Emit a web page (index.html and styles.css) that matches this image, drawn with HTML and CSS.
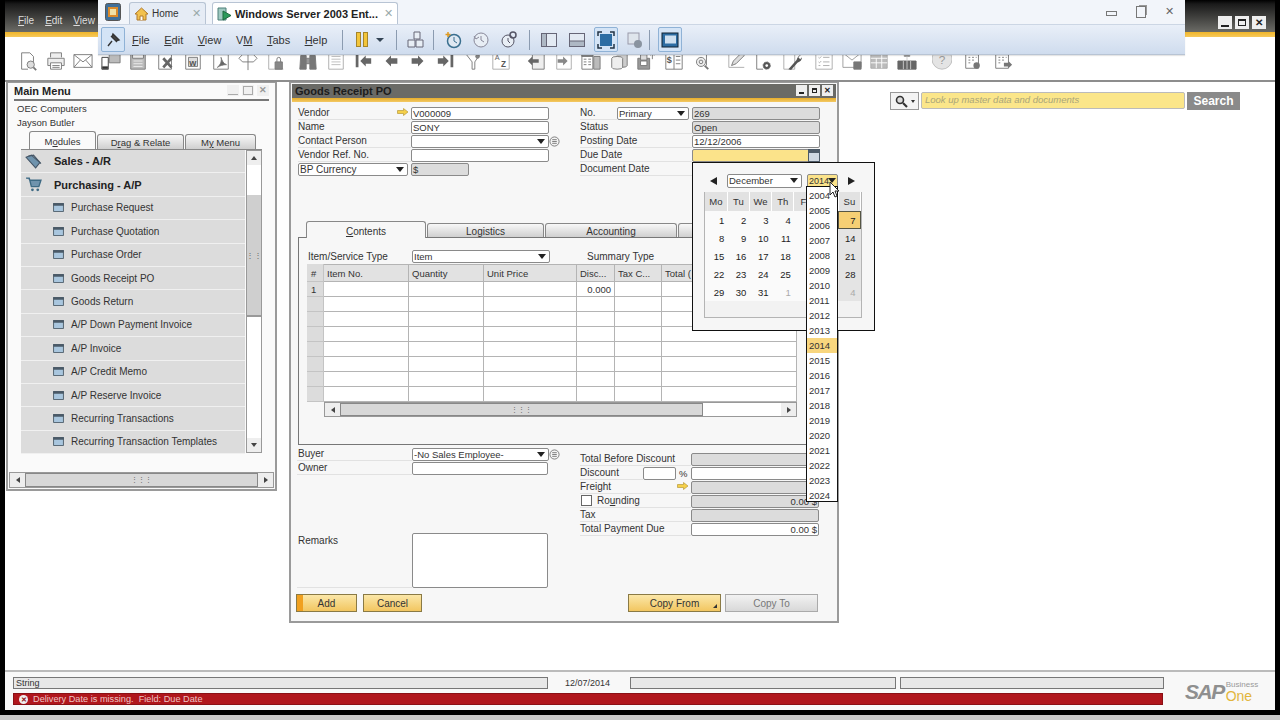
FILE: index.html
```html
<!DOCTYPE html>
<html lang="en">
<head>
  <meta charset="UTF-8">
  <title>Goods Receipt PO</title>
  <link rel="stylesheet" href="styles.css">
</head>
<body>
  <svg class="sprite" width="0" height="0">
    <defs>
      <symbol id="i-docsearch" viewBox="0 0 22 22"><path d="M4 2h9l4 4v6M4 2v18h7" fill="#fff"/><circle cx="14" cy="15" r="4" fill="#ddd"/><path d="M17 18l3 3" stroke-width="2"/></symbol>
      <symbol id="i-print" viewBox="0 0 22 22"><path d="M5 7V2h12v5M5 16H2V8h18v8h-3" fill="#eee"/><path d="M5 13h12v7H5z" fill="#fff"/><path d="M7 16h8M7 18h8"/></symbol>
      <symbol id="i-mail" viewBox="0 0 22 22"><path d="M1 4h20v14H1zM1 4l10 8 10-8M1 18l7-8M21 18l-7-8" fill="#fff"/></symbol>
      <symbol id="i-fax" viewBox="0 0 22 22"><path d="M9 3h12v10H9z" fill="#bbb"/><path d="M1 7h7v13H1z" fill="#fff" stroke="#333"/><path d="M1 17h7v3H1z" fill="#333"/></symbol>
      <symbol id="i-calc" viewBox="0 0 22 22"><path d="M3 2h16v18H3z" fill="#bbb"/><path d="M5 4h12v4H5z" fill="#eee"/><path d="M6 11h10M6 14h10M6 17h10" stroke="#eee"/></symbol>
      <symbol id="i-excel" viewBox="0 0 22 22"><path d="M3 3h14v17H3z" fill="#fff"/><path d="M8 8l9 10M17 8l-9 10" stroke="#666" stroke-width="3"/></symbol>
      <symbol id="i-word" viewBox="0 0 22 22"><path d="M3 4h16v16H3z" fill="#fff"/><path d="M6 7h10v10H6z" fill="#ddd"/><text x="7" y="16" font-size="10" font-weight="700" stroke="none" fill="#555">w</text></symbol>
      <symbol id="i-pdf" viewBox="0 0 22 22"><path d="M3 4h16v16H3z" fill="#fff"/><path d="M7 18c4-3 5-8 4-11 1 4 3 7 6 8-4 0-7 1-10 3z" fill="#666"/></symbol>
      <symbol id="i-arrows" viewBox="0 0 22 22"><path d="M11 2v19M11 4H5L1 8l4 4h6M11 4h6l4 4-4 4h-6" fill="#fff"/></symbol>
      <symbol id="i-lockdoc" viewBox="0 0 22 22"><path d="M3 2v18h16" stroke="#aaa"/><path d="M10 12h8v8h-8z" fill="#888"/><path d="M12 12V9a2 2 0 014 0v3"/></symbol>
      <symbol id="i-binoc" viewBox="0 0 22 22"><path d="M3 5h6v15H2zM13 5h6l1 15h-7z" fill="#777"/><path d="M9 8h4v6H9z" fill="#999"/></symbol>
      <symbol id="i-list" viewBox="0 0 22 22"><path d="M3 2h16v18H3z" fill="#fff" stroke="#aaa"/><path d="M6 6h10M6 9h10M6 12h10M6 15h10" stroke="#bbb"/></symbol>
      <symbol id="i-first" viewBox="0 0 22 22"><path d="M3 4h3v14H3zM8 11l6-6v3h6v6h-6v3z" fill="#666" stroke="none"/></symbol>
      <symbol id="i-prev" viewBox="0 0 22 22"><path d="M5 11l6-6v3h7v6h-7v3z" fill="#666" stroke="none"/></symbol>
      <symbol id="i-next" viewBox="0 0 22 22"><path d="M17 11l-6-6v3H4v6h7v3z" fill="#666" stroke="none"/></symbol>
      <symbol id="i-last" viewBox="0 0 22 22"><path d="M19 4h-3v14h3zM14 11L8 5v3H2v6h6v3z" fill="#666" stroke="none"/></symbol>
      <symbol id="i-filter" viewBox="0 0 22 22"><path d="M3 3l7 9v8h3v-8l6-9" fill="#fff"/><circle cx="16" cy="6" r="2" fill="#888"/></symbol>
      <symbol id="i-az" viewBox="0 0 22 22"><path d="M2 2h18v18H2z" fill="#fff" stroke="#aaa"/><text x="4" y="10" font-size="8" stroke="none" fill="#666">A</text><text x="11" y="18" font-size="9" font-weight="700" stroke="none" fill="#555">Z</text></symbol>
      <symbol id="i-docleft" viewBox="0 0 22 22"><path d="M7 2h13v18H7z" fill="#eee"/><path d="M2 11l5-5v3h7v4H7v3z" fill="#666" stroke="none"/></symbol>
      <symbol id="i-docright" viewBox="0 0 22 22"><path d="M3 4h16v16H3z" fill="#fff" stroke="#aaa"/><path d="M15 11l-5-5v3H4v4h6v3z" fill="#888" stroke="none"/></symbol>
      <symbol id="i-tabledoc" viewBox="0 0 22 22"><path d="M1 3h12v17H1z" fill="#fff"/><path d="M1 3h12v3H1z" fill="#888"/><path d="M3 9h3M8 9h3M3 12h3M8 12h3M3 15h3M8 15h3"/><path d="M14 6h7v14h-7z" fill="#bbb"/></symbol>
      <symbol id="i-cyl" viewBox="0 0 22 22"><path d="M8 4a6 2 0 0112 0v12a6 2 0 01-6 2" fill="#ccc"/><path d="M3 8a6 2 0 0112 0v10a6 2 0 01-12 0z" fill="#eee"/></symbol>
      <symbol id="i-box" viewBox="0 0 22 22"><path d="M2 8h13v12H2z" fill="#999"/><path d="M5 4h7v6H5z" fill="#ddd"/><path d="M5 11h7v5H5z" fill="#fff"/><path d="M18 3v6M16 5l2-2 2 2"/></symbol>
      <symbol id="i-dollar" viewBox="0 0 22 22"><path d="M2 2h18v18H2z" fill="#fff"/><path d="M11 2v18M13 6h5M13 10h5M13 14h5"/><text x="3" y="13" font-size="10" font-weight="700" stroke="none" fill="#555">$</text></symbol>
      <symbol id="i-find" viewBox="0 0 22 22"><path d="M2 3h15v13" fill="#fff"/><circle cx="11" cy="12" r="5" fill="#eee"/><circle cx="11" cy="12" r="2"/><path d="M15 16l4 4" stroke-width="2"/></symbol>
      <symbol id="i-pencil" viewBox="0 0 22 22"><path d="M2 18h17M2 3v15" stroke="#aaa"/><path d="M5 16l2-5 9-9 3 3-9 9z" fill="#ddd"/></symbol>
      <symbol id="i-gear" viewBox="0 0 22 22"><path d="M3 2v18h7" stroke="#777"/><circle cx="14" cy="16" r="4" fill="#555" stroke-dasharray="2 1"/><circle cx="14" cy="16" r="1.5" fill="#fff" stroke="none"/></symbol>
      <symbol id="i-wrench" viewBox="0 0 22 22"><path d="M2 3h12v17H2z" fill="#fff" stroke="#aaa"/><path d="M7 20l9-10c1-3 2-5 5-6l-3 3 2 2 2-2c0 3-2 5-5 6l-7 8z" fill="#555" stroke="none"/></symbol>
      <symbol id="i-check" viewBox="0 0 22 22"><path d="M2 2h18v18H2z" fill="#fff" stroke="#aaa"/><path d="M5 7l1 1 2-2M5 12l1 1 2-2M5 16h2M10 7h7M10 12h7M10 16h7" stroke="#aaa"/></symbol>
      <symbol id="i-mailchart" viewBox="0 0 22 22"><path d="M1 2h20v16H1zM1 2l10 8 10-8" fill="#fff" stroke="#999"/><path d="M13 12h8v8h-8z" fill="#777"/></symbol>
      <symbol id="i-grid" viewBox="0 0 22 22"><path d="M2 3h18v16H2z" fill="#bbb" stroke="#aaa"/><path d="M2 8h18M2 13h18M8 8v11M14 3v16" stroke="#fff"/></symbol>
      <symbol id="i-org" viewBox="0 0 22 22"><path d="M8 1h6v5H8z" fill="#999" stroke="#999"/><path d="M1 11h20v9H1z" fill="#666" stroke="#666"/><path d="M11 6v14M7 11v9M15 11v9" stroke="#ccc"/></symbol>
      <symbol id="i-help" viewBox="0 0 22 22"><circle cx="11" cy="9" r="11" fill="#e4e4e4" stroke="#bbb"/><text x="7.5" y="14" font-size="13" stroke="none" fill="#999">?</text></symbol>
      <symbol id="i-tablegear" viewBox="0 0 22 22"><path d="M3 1h14v18H3z" fill="#fff"/><path d="M3 1h14v3H3z" fill="#888"/><path d="M6 7h2M10 7h2M14 7h1M6 10h2M10 10h2M6 13h2"/><circle cx="15" cy="16" r="3.5" fill="#777" stroke="none"/></symbol>
      <symbol id="i-tablearrow" viewBox="0 0 22 22"><path d="M3 1h14v18H3z" fill="#fff"/><path d="M3 1h14v3H3z" fill="#888"/><path d="M6 7h2M10 7h2M14 7h1M6 10h2M10 10h2M6 13h2"/><path d="M21 15l-4-4v2h-5v4h5v2z" fill="#777" stroke="none"/></symbol>
      <symbol id="i-form" viewBox="0 0 12 10"><path d="M.5.5h11v9H.5z" fill="#a9c6de" stroke="#4b5a68"/><path d="M.5.5h11v2H.5z" fill="#4b5a68" stroke="#4b5a68"/></symbol>
      <symbol id="i-arrow" viewBox="0 0 12 8"><path d="M.5 2.500h6v-2L11 4 6.500 7.500v-2h-6z" fill="#f5d04a" stroke="#b79a3a" stroke-width=".7"/></symbol>
      <symbol id="i-menu" viewBox="0 0 12 12"><circle cx="6" cy="6" r="5" fill="#f4f4f4" stroke="#777"/><path d="M3.500 4h5M3.500 6h5M3.500 8h5" stroke="#777"/></symbol>
    </defs>
  </svg>

  <div class="app">
    <div class="app-title">
      <div class="app-menu"><span><u>F</u>ile</span><span><u>E</u>dit</span><span><u>V</u>iew</span></div>
      <div class="app-controls">
        <span class="ctl-min"></span><span class="ctl-max"></span><span class="ctl-close">✕</span>
      </div>
    </div>

    <div class="toolbar">
      <svg class="ti"><use href="#i-docsearch"/></svg>
      <svg class="ti"><use href="#i-print"/></svg>
      <svg class="ti"><use href="#i-mail"/></svg>
      <svg class="ti"><use href="#i-fax"/></svg>
      <svg class="ti"><use href="#i-calc"/></svg>
      <svg class="ti"><use href="#i-excel"/></svg>
      <svg class="ti"><use href="#i-word"/></svg>
      <svg class="ti"><use href="#i-pdf"/></svg>
      <svg class="ti"><use href="#i-arrows"/></svg>
      <svg class="ti"><use href="#i-lockdoc"/></svg>
      <svg class="ti ti-gap"><use href="#i-binoc"/></svg>
      <svg class="ti"><use href="#i-list"/></svg>
      <svg class="ti"><use href="#i-first"/></svg>
      <svg class="ti"><use href="#i-prev"/></svg>
      <svg class="ti"><use href="#i-next"/></svg>
      <svg class="ti"><use href="#i-last"/></svg>
      <svg class="ti"><use href="#i-filter"/></svg>
      <svg class="ti"><use href="#i-az"/></svg>
      <svg class="ti ti-gap-lg"><use href="#i-docleft"/></svg>
      <svg class="ti"><use href="#i-docright"/></svg>
      <svg class="ti"><use href="#i-tabledoc"/></svg>
      <svg class="ti"><use href="#i-cyl"/></svg>
      <svg class="ti"><use href="#i-box"/></svg>
      <svg class="ti"><use href="#i-dollar"/></svg>
      <svg class="ti"><use href="#i-find"/></svg>
      <svg class="ti ti-gap-lg"><use href="#i-pencil"/></svg>
      <svg class="ti"><use href="#i-gear"/></svg>
      <svg class="ti"><use href="#i-wrench"/></svg>
      <svg class="ti ti-gap"><use href="#i-check"/></svg>
      <svg class="ti"><use href="#i-mailchart"/></svg>
      <svg class="ti"><use href="#i-grid"/></svg>
      <svg class="ti"><use href="#i-org"/></svg>
      <svg class="ti ti-gap-lg"><use href="#i-help"/></svg>
      <svg class="ti ti-gap-sm"><use href="#i-tablegear"/></svg>
      <svg class="ti ti-gap-sm"><use href="#i-tablearrow"/></svg>
    </div>

    <div class="workspace">
      <!-- main menu window -->
      <div class="win main-menu">
        <div class="mm-title">
          <span>Main Menu</span>
          <div class="mm-controls"><span class="mm-min"></span><span class="mm-max"></span><span class="mm-close">✕</span></div>
        </div>
        <div class="mm-info">OEC Computers</div>
        <div class="mm-info">Jayson Butler</div>
        <div class="mm-tabs">
          <span class="mm-tab active">M<u>o</u>dules</span>
          <span class="mm-tab tab-drag">D<u>r</u>ag &amp; Relate</span>
          <span class="mm-tab tab-my">M<u>y</u> Menu</span>
        </div>
        <div class="mm-body">
          <ul class="mm-list">
            <li class="mod"><svg class="mod-icon" viewBox="0 0 16 14"><path d="M1 3l5-2 8 7-4 5z" fill="#6f93ad" stroke="#456"/><path d="M3 2l5-1 7 8" fill="none" stroke="#456"/></svg>Sales - A/R</li>
            <li class="mod"><svg class="mod-icon" viewBox="0 0 16 14"><path d="M1 1h3l2 8h7l2-6H5" fill="#6f93ad" stroke="#3e6a84" stroke-width="1.300"/><circle cx="7" cy="12" r="1.300" fill="#3e6a84"/><circle cx="12" cy="12" r="1.300" fill="#3e6a84"/></svg>Purchasing - A/P</li>
            <li><svg class="form-icon"><use href="#i-form"/></svg>Purchase Request</li>
            <li><svg class="form-icon"><use href="#i-form"/></svg>Purchase Quotation</li>
            <li><svg class="form-icon"><use href="#i-form"/></svg>Purchase Order</li>
            <li><svg class="form-icon"><use href="#i-form"/></svg>Goods Receipt PO</li>
            <li><svg class="form-icon"><use href="#i-form"/></svg>Goods Return</li>
            <li><svg class="form-icon"><use href="#i-form"/></svg>A/P Down Payment Invoice</li>
            <li><svg class="form-icon"><use href="#i-form"/></svg>A/P Invoice</li>
            <li><svg class="form-icon"><use href="#i-form"/></svg>A/P Credit Memo</li>
            <li><svg class="form-icon"><use href="#i-form"/></svg>A/P Reserve Invoice</li>
            <li><svg class="form-icon"><use href="#i-form"/></svg>Recurring Transactions</li>
            <li><svg class="form-icon"><use href="#i-form"/></svg>Recurring Transaction Templates</li>
          </ul>
          <div class="vscroll">
            <span class="sb-up"></span>
            <span class="vscroll-top"></span>
            <span class="vscroll-thumb">⋮⋮</span>
            <span class="vscroll-rest"></span>
            <span class="sb-down"></span>
          </div>
        </div>
        <div class="hscroll mm-hscroll">
          <span class="sb-left"></span>
          <span class="hscroll-thumb">⋮⋮⋮</span>
          <span class="sb-right"></span>
        </div>
      </div>

      <!-- goods receipt window -->
      <div class="win goods">
        <div class="gr-title">
          <span>Goods Receipt PO</span>
          <div class="gr-controls"><span class="ctl-min"></span><span class="ctl-max"></span><span class="ctl-close">✕</span></div>
        </div>

        <div class="gr-top">
          <div class="col-left">
            <div class="row"><label>Vendor <svg class="link-arrow"><use href="#i-arrow"/></svg></label><span class="field">V000009</span></div>
            <div class="row"><label>Name</label><span class="field">SONY</span></div>
            <div class="row"><label>Contact Person</label><span class="field select"></span><svg class="menu-dot"><use href="#i-menu"/></svg></div>
            <div class="row"><label>Vendor Ref. No.</label><span class="field"></span></div>
            <div class="row"><label class="select label-select">BP Currency</label><span class="field field-gray field-short">$</span></div>
          </div>
          <div class="col-right">
            <div class="row"><label class="label-no">No.</label><span class="field select field-primary">Primary</span><span class="field field-gray field-side">269</span></div>
            <div class="row"><label>Status</label><span class="field field-gray field-side">Open</span></div>
            <div class="row"><label>Posting Date</label><span class="field field-side">12/12/2006</span></div>
            <div class="row"><label>Due Date</label><span class="field field-yellow field-side"><span class="cal-btn"></span></span></div>
            <div class="row"><label>Document Date</label></div>
          </div>
        </div>

        <div class="gr-tabs">
          <span class="gr-tab active"><u>C</u>ontents</span>
          <span class="gr-tab tab-logistics">Logistics</span>
          <span class="gr-tab tab-accounting">Accounting</span>
          <span class="gr-tab tab-more"></span>
        </div>
        <div class="gr-panel">
          <div class="type-row">
            <label>Item/Service Type</label>
            <span class="field select">Item</span>
            <label class="label-summary">Summary Type</label>
          </div>
          <table class="items">
            <tr><th class="c-num">#</th><th class="c-item">Item No.</th><th class="c-qty">Quantity</th><th class="c-price">Unit Price</th><th class="c-disc">Disc...</th><th class="c-tax">Tax C...</th><th>Total (</th></tr>
            <tr><td class="c-num">1</td><td></td><td></td><td></td><td class="num">0.000</td><td></td><td></td></tr>
            <tr><td class="c-num"></td><td></td><td></td><td></td><td></td><td></td><td></td></tr>
            <tr><td class="c-num"></td><td></td><td></td><td></td><td></td><td></td><td></td></tr>
            <tr><td class="c-num"></td><td></td><td></td><td></td><td></td><td></td><td></td></tr>
            <tr><td class="c-num"></td><td></td><td></td><td></td><td></td><td></td><td></td></tr>
            <tr><td class="c-num"></td><td></td><td></td><td></td><td></td><td></td><td></td></tr>
            <tr><td class="c-num"></td><td></td><td></td><td></td><td></td><td></td><td></td></tr>
            <tr><td class="c-num"></td><td></td><td></td><td></td><td></td><td></td><td></td></tr>
          </table>
          <div class="hscroll items-hscroll">
            <span class="sb-left"></span>
            <span class="hscroll-thumb items-thumb">⋮⋮⋮</span>
            <span class="hscroll-rest"></span>
            <span class="sb-right"></span>
          </div>
        </div>

        <div class="gr-lower">
          <div class="lower-left">
            <div class="row"><label>Buyer</label><span class="field select field-lower">-No Sales Employee-</span><svg class="menu-dot"><use href="#i-menu"/></svg></div>
            <div class="row"><label>Owner</label><span class="field field-lower"></span></div>
            <div class="row row-remarks"><label>Remarks</label><span class="field field-lower remarks"></span></div>
          </div>
          <div class="lower-right">
            <div class="row"><label>Total Before Discount</label><span class="field field-gray field-total"></span></div>
            <div class="row"><label class="label-disc">Discount</label><span class="field disc-pct"></span><span class="pct">%</span><span class="field field-total"></span></div>
            <div class="row"><label>Freight <svg class="link-arrow"><use href="#i-arrow"/></svg></label><span class="field field-gray field-total"></span></div>
            <div class="row"><label class="label-check"><span class="check"></span><span>Ro<u>u</u>nding</span></label><span class="field field-gray field-total num">0.00 $</span></div>
            <div class="row"><label>Tax</label><span class="field field-gray field-total"></span></div>
            <div class="row"><label>Total Payment Due</label><span class="field field-total num">0.00 $</span></div>
          </div>
        </div>

        <div class="gr-buttons">
          <button class="btn btn-add">Add</button>
          <button class="btn btn-cancel">Cancel</button>
          <button class="btn btn-copy">Copy From</button>
          <button class="btn btn-off">Copy To</button>
        </div>
      </div>

      <!-- date picker over the form -->
      <div class="calendar">
        <div class="cal-head">
          <span class="cal-prev"></span>
          <span class="field select cal-month">December</span>
          <span class="field select cal-year">2014</span>
          <span class="cal-next"></span>
        </div>
        <div class="cal-body">
          <table class="cal-grid">
            <tr><th>Mo</th><th>Tu</th><th>We</th><th>Th</th><th>Fr</th><th></th><th>Su</th></tr>
            <tr><td>1</td><td>2</td><td>3</td><td>4</td><td></td><td class="we"></td><td class="today">7</td></tr>
            <tr><td>8</td><td>9</td><td>10</td><td>11</td><td></td><td class="we"></td><td class="we">14</td></tr>
            <tr><td>15</td><td>16</td><td>17</td><td>18</td><td></td><td class="we"></td><td class="we">21</td></tr>
            <tr><td>22</td><td>23</td><td>24</td><td>25</td><td></td><td class="we"></td><td class="we">28</td></tr>
            <tr><td>29</td><td>30</td><td>31</td><td class="off">1</td><td></td><td class="we"></td><td class="we off">4</td></tr>
          </table>
        </div>
      </div>
      <ul class="years">
        <li>2004</li><li>2005</li><li>2006</li><li>2007</li><li>2008</li><li>2009</li><li>2010</li><li>2011</li><li>2012</li><li>2013</li>
        <li class="sel">2014</li>
        <li>2015</li><li>2016</li><li>2017</li><li>2018</li><li>2019</li><li>2020</li><li>2021</li><li>2022</li><li>2023</li><li>2024</li>
      </ul>
      <svg class="cursor" viewBox="0 0 12 18"><path d="M1 1v13l3-3 2 5 2-1-2-5h4z" fill="#fff" stroke="#222"/></svg>

      <div class="search">
        <span class="search-drop">
          <svg width="14" height="13" viewBox="0 0 14 13"><circle cx="5" cy="5" r="3.500" fill="#ddd" stroke="#333" stroke-width="1.600"/><path d="M8 8l4 4" stroke="#333" stroke-width="2.200"/></svg>
          <i></i>
        </span>
        <span class="search-input">Look up master data and documents</span>
        <span class="search-btn">Search</span>
      </div>
    </div>

    <div class="status">
      <div class="status-main">
        <div class="status-row">
          <span class="st-box st-string">String</span>
          <span class="st-date">12/07/2014</span>
          <span class="st-box st-a"></span>
          <span class="st-box st-b"></span>
        </div>
        <div class="st-error"><span class="err-dot">✕</span>Delivery Date is missing.&nbsp; Field: Due Date</div>
      </div>
      <div class="sap-logo">
        <span class="sap">SAP</span>
        <span class="sap-sub"><span class="sap-bus">Business</span><span class="sap-one">One</span></span>
      </div>
    </div>
  </div>

  <!-- virtual machine toolbar laid over the app -->
  <div class="vm-bar">
    <div class="vm-tabs">
      <svg class="vm-logo" viewBox="0 0 16 18"><rect x=".5" y=".5" width="15" height="17" rx="2" fill="#3f6f99" stroke="#555"/><rect x="3" y="4" width="10" height="10" fill="#d98a2b"/><rect x="5" y="6" width="6" height="6" fill="#f0e1a8"/></svg>
      <div class="vm-tab">
        <svg width="15" height="14" viewBox="0 0 15 14"><path d="M1 7l6.500-6L14 7h-2v6H3V7z" fill="#f2c14e" stroke="#b0792a"/><path d="M6 13V9h3v4" fill="#fff" stroke="#b0792a"/></svg>
        <span>Home</span><b>✕</b>
      </div>
      <div class="vm-tab vm-tab-active">
        <svg width="15" height="16" viewBox="0 0 15 16"><path d="M1 2h8v12H1z" fill="#9fc9c0" stroke="#4d7f78"/><path d="M6 5l8 4.500L6 14z" fill="#2c9a5a" stroke="#1d6b3e"/></svg>
        <span>Windows Server 2003 Ent...</span><b>✕</b>
      </div>
      <div class="vm-win">
        <span class="vm-min"></span><span class="vm-max"></span><span class="vm-close">✕</span>
      </div>
    </div>
    <div class="vm-tools">
      <span class="vm-btn vm-pin"><svg width="16" height="16" viewBox="0 0 16 16"><path d="M3 14l4-5M6 4l6 6M8 2l6 6-3 1-4-4z" fill="#444" stroke="#333" stroke-width="1.400"/></svg></span>
      <div class="vm-menu"><span><u>F</u>ile</span><span><u>E</u>dit</span><span><u>V</u>iew</span><span>V<u>M</u></span><span><u>T</u>abs</span><span><u>H</u>elp</span></div>
      <i class="vm-sep"></i>
      <span class="vm-pause"><i></i><i></i></span>
      <span class="vm-caret"></span>
      <i class="vm-sep"></i>
      <svg class="vi vi-share" viewBox="0 0 18 18"><path d="M7 1h6v7H7zM1 9h7v7H1zM9 9h7v7H9z" fill="#e8eef5" stroke="#667"/></svg>
      <i class="vm-sep"></i>
      <svg class="vi vi-clock" viewBox="0 0 18 18"><circle cx="10" cy="10" r="6.500" fill="#dfe8f2" stroke="#3a6f8f" stroke-width="1.500"/><path d="M10 6v4l3 2" fill="none" stroke="#3a6f8f"/><path d="M4 1v5M1.500 3.500h5" stroke="#e09a20" stroke-width="1.500"/></svg>
      <svg class="vi" viewBox="0 0 18 18"><circle cx="9" cy="9" r="7" fill="#e8eef5" stroke="#889"/><path d="M9 5v4l3 2M2 5l2 3 3-2" fill="none" stroke="#889"/></svg>
      <svg class="vi" viewBox="0 0 18 18"><circle cx="8" cy="10" r="6" fill="#e8eef5" stroke="#556"/><path d="M8 7v3l2 2" fill="none" stroke="#556"/><circle cx="13" cy="4" r="3" fill="none" stroke="#556" stroke-width="1.500"/></svg>
      <i class="vm-sep sep-view"></i>
      <svg class="vi" viewBox="0 0 18 18"><rect x="1.500" y="2.500" width="15" height="13" fill="#e3eaf3" stroke="#667"/><rect x="1.500" y="2.500" width="5" height="13" fill="#aeb8c4" stroke="#667"/></svg>
      <svg class="vi" viewBox="0 0 18 18"><rect x="1.500" y="2.500" width="15" height="13" fill="#e3eaf3" stroke="#667"/><rect x="1.500" y="10" width="15" height="5.500" fill="#aeb8c4" stroke="#667"/></svg>
      <span class="vm-btn vm-full"><svg width="18" height="18" viewBox="0 0 18 18"><rect x="3" y="3" width="12" height="12" fill="#2d6da3"/><path d="M1 5V1h4M13 1h4v4M17 13v4h-4M5 17H1v-4" fill="none" stroke="#234" stroke-width="1.500"/></svg></span>
      <svg class="vi" viewBox="0 0 18 18"><rect x="2" y="2" width="11" height="11" fill="#dfe5ec" stroke="#99a"/><circle cx="12" cy="13" r="4" fill="#8a94a0"/></svg>
      <i class="vm-sep"></i>
      <span class="vm-btn vm-unity"><svg width="18" height="16" viewBox="0 0 18 16"><rect x="1" y="1" width="16" height="14" fill="#2d6da3" stroke="#123"/><rect x="4" y="3.500" width="11" height="8" fill="#cfe0f0"/></svg></span>
    </div>
  </div>
</body>
</html>
```

FILE: styles.css
```css
* {
  box-sizing: border-box;
}

html,
body {
  height: 100%;
}

body {
  margin: 0;
  width: 1280px;
  height: 720px;
  overflow: hidden;
  position: relative;
  background: #c9c9c9;
  font-family: "Liberation Sans", Arial, sans-serif;
  font-size: 10px;
  color: #333;
}

.sprite {
  position: absolute;
}

.app {
  width: 1280px;
  height: 715px;
  padding: 0 5px;
  background: #000;
  display: flex;
  flex-direction: column;
}

/* top title bar */
.app-title {
  height: 37px;
  flex: none;
  padding-top: 14px;
  display: flex;
  justify-content: space-between;
  background: linear-gradient(#000 0, #1a1a1a 4px, #6b6b66 32px, #f0b52a 32px, #f7c95a 37px);
}

.app-menu {
  display: flex;
  gap: 11px;
  padding-left: 13px;
  font-size: 10px;
  line-height: 13px;
  color: #ddd;
}

.app-controls {
  display: flex;
  gap: 3px;
  padding-right: 9px;
  height: 14px;
  margin-top: 2px;
}

.app-controls span,
.gr-controls span {
  width: 14px;
  height: 13px;
  background: #eee;
  position: relative;
  font-size: 10px;
  line-height: 13px;
  text-align: center;
  font-weight: 700;
  color: #222;
}

.ctl-min::after {
  content: "";
  position: absolute;
  left: 3px;
  right: 3px;
  bottom: 2px;
  height: 2px;
  background: #222;
}

.ctl-max::after {
  content: "";
  position: absolute;
  left: 3px;
  right: 3px;
  top: 3px;
  bottom: 3px;
  border: 1px solid #222;
  border-top-width: 2px;
}

/* main toolbar */
.toolbar {
  height: 45px;
  flex: none;
  padding: 14px 0 0 13px;
  background: #fff;
  border-bottom: 2px solid #8d8d8d;
  display: flex;
}

.ti {
  width: 20px;
  height: 20px;
  margin-right: 7.5px;
  flex: none;
  fill: none;
  stroke: #777;
}

.ti-gap {
  margin-left: 5px;
}

.ti-gap-lg {
  margin-left: 8px;
}

.ti-gap-sm {
  margin-left: 3px;
}

/* workspace holds the floating windows */
.workspace {
  flex: 1;
  position: relative;
  background: #fff;
}

.win {
  position: absolute;
  top: 0;
  background: #f7f7f7;
  border: 1px solid #9a9a9a;
  border-width: 1px 2px 2px;
}

/* main menu */
.main-menu {
  left: 1px;
  width: 271px;
  height: 409px;
  background: #fafafa;
  padding: 0 6px;
}

.mm-title {
  height: 18px;
  padding: 2px 0 0;
  display: flex;
  justify-content: space-between;
  align-items: flex-start;
  border-bottom: 2px solid #777;
  font-size: 11px;
  font-weight: 700;
  color: #222;
  line-height: 13px;
}

.mm-controls {
  display: flex;
  gap: 3px;
}

.mm-controls span {
  width: 12px;
  height: 11px;
  color: #999;
  font-size: 9px;
  line-height: 11px;
  text-align: center;
  background: #f0f0f0;
  position: relative;
}

.mm-min::after {
  content: "";
  position: absolute;
  left: 1px;
  right: 1px;
  bottom: 1px;
  height: 1px;
  background: #aaa;
}

.mm-max::after {
  content: "";
  position: absolute;
  inset: 1px;
  border: 1px solid #aaa;
}

.mm-info {
  height: 14px;
  line-height: 14px;
  padding-left: 3px;
  font-size: 9.5px;
  margin-top: 1px;
  margin-bottom: -1px;
}

.mm-tabs {
  display: flex;
  height: 18px;
  margin: 2px 0 0 15px;
  align-items: flex-end;
  position: relative;
  z-index: 1;
}

.mm-tab {
  height: 15px;
  border: 1px solid #888;
  border-bottom: none;
  border-radius: 3px 3px 0 0;
  background: linear-gradient(#f8f8f8, #cfcfcf);
  text-align: center;
  line-height: 15px;
  font-size: 9.5px;
  margin-right: 1px;
}

.mm-tab.active {
  width: 67px;
  height: 18px;
  line-height: 20px;
  background: #fafafa;
}

.tab-drag {
  width: 87px;
}

.tab-my {
  width: 71px;
}

.mm-body {
  display: flex;
  width: 241px;
  margin-left: 7px;
  height: 304px;
  border-top: 1px solid #888;
}

.mm-list {
  list-style: none;
  margin: 0;
  padding: 0;
  width: 224px;
  background: #dcdcdc;
  flex: none;
}

.mm-list li {
  height: 23.4px;
  display: flex;
  align-items: center;
  padding-left: 32px;
  border-bottom: 1px solid #f0f0f0;
  font-size: 10px;
  gap: 7px;
}

.mm-list li.mod {
  padding-left: 4px;
  gap: 12px;
  font-size: 11px;
  font-weight: 700;
  color: #222;
}

.mod-icon {
  width: 17px;
  height: 15px;
}

.form-icon {
  width: 11px;
  height: 9px;
}

.vscroll {
  width: 16px;
  margin-left: 1px;
  display: flex;
  flex-direction: column;
  border: 1px solid #999;
  background: #ccc;
}

.sb-up,
.sb-down {
  height: 14px;
  background: #eee;
  flex: none;
  position: relative;
}

.sb-up::after,
.sb-down::after,
.sb-left::after,
.sb-right::after {
  content: "";
  position: absolute;
  left: 50%;
  top: 50%;
  width: 0;
  height: 0;
  border: 3px solid transparent;
}

.sb-up::after {
  margin: -5px 0 0 -3px;
  border-bottom: 4px solid #444;
}

.sb-down::after {
  margin: -2px 0 0 -3px;
  border-top: 4px solid #444;
}

.vscroll-top {
  height: 30px;
  background: #fff;
  flex: none;
}

.vscroll-thumb {
  height: 122px;
  background: #cfcfcf;
  border-bottom: 2px solid #999;
  flex: none;
  display: flex;
  align-items: center;
  justify-content: center;
  font-size: 8px;
  color: #666;
}

.vscroll-rest {
  flex: 1;
  background: #fff;
}

.hscroll {
  display: flex;
  height: 16px;
  border: 1px solid #999;
  background: #ddd;
}

.mm-hscroll {
  margin: 19px -5px 0 -5px;
}

.sb-left,
.sb-right {
  width: 15px;
  flex: none;
  background: #eee;
  position: relative;
}

.sb-left::after {
  margin: -3px 0 0 -5px;
  border-right: 4px solid #444;
}

.sb-right::after {
  margin: -3px 0 0 -2px;
  border-left: 4px solid #444;
}

.hscroll-thumb {
  flex: 1;
  background: #d8d8d8;
  border: 1px solid #888;
  text-align: center;
  font-size: 7px;
  line-height: 12px;
  color: #666;
}

.hscroll-rest {
  flex: 1;
  background: #fff;
}

/* goods receipt */
.goods {
  left: 284px;
  width: 550px;
  height: 541px;
  padding: 1px 1px 0;
}

.gr-title {
  height: 18px;
  padding: 1px 0 0 3px;
  display: flex;
  justify-content: space-between;
  background: linear-gradient(#6a6a66 0, #6a6a66 14px, #e7ad2b 14px, #f3c965 18px);
  font-size: 11px;
  font-weight: 700;
  line-height: 13px;
  color: #1c1c1c;
}

.gr-controls {
  display: flex;
  gap: 2px;
  padding-right: 3px;
}

.gr-controls span {
  width: 11px;
  height: 11px;
  font-size: 8px;
  line-height: 11px;
}

.gr-top {
  display: flex;
  padding: 4px 0 0 6px;
}

.col-left {
  width: 282px;
  flex: none;
}

.row {
  display: flex;
  height: 14px;
  align-items: center;
}

.row label {
  height: 14px;
  line-height: 13px;
  border-bottom: 1px solid #e2e2e2;
  position: relative;
  display: block;
  flex: none;
}

.col-left .row label {
  width: 113px;
}

.col-right .row label {
  width: 112px;
}

.col-right .row .label-no {
  width: 37px;
}

.field {
  display: block;
  width: 138px;
  height: 13px;
  line-height: 11px;
  padding-left: 1px;
  background: #fff;
  border: 1px solid #8a8a8a;
  border-radius: 2px;
  font-size: 9.5px;
  position: relative;
  flex: none;
  white-space: nowrap;
}

.select::after {
  content: "";
  position: absolute;
  right: 3px;
  top: 3px;
  border: 4px solid transparent;
  border-top: 5px solid #222;
  border-bottom: none;
}

.col-left .row .label-select {
  background: #fff;
  border: 1px solid #8a8a8a;
  border-radius: 2px;
  width: 110px;
  height: 13px;
  line-height: 11px;
  margin-right: 3px;
  padding-left: 1px;
  font-size: 10px;
}

.field-gray {
  background: #dcdcdc;
}

.field-short {
  width: 58px;
}

.field-primary {
  width: 72px;
  margin-right: 3px;
}

.field-side {
  width: 128px;
}

.field-yellow {
  background: #fbe38a;
}

.cal-btn {
  position: absolute;
  right: -1px;
  top: -1px;
  width: 12px;
  height: 13px;
  background: linear-gradient(#4d5a68 3px, #cfd8e2 3px);
  border: 1px solid #4d5a68;
}

.link-arrow {
  position: absolute;
  right: 2px;
  top: 2px;
  width: 12px;
  height: 8px;
}

.menu-dot {
  width: 11px;
  height: 11px;
  margin-left: 0;
  flex: none;
}

.gr-tabs {
  display: flex;
  height: 16px;
  margin: 45px 0 0 14px;
  align-items: flex-end;
  position: relative;
  z-index: 1;
}

.gr-tab {
  height: 14px;
  border: 1px solid #888;
  border-bottom: none;
  border-radius: 3px 3px 0 0;
  background: linear-gradient(#f8f8f8, #cfcfcf);
  text-align: center;
  line-height: 16px;
  margin-right: 1px;
  font-size: 10px;
}

.gr-tab.active {
  width: 120px;
  height: 17px;
  line-height: 19px;
  background: #f7f7f7;
  margin-bottom: -1px;
}

.tab-logistics {
  width: 117px;
}

.tab-accounting {
  width: 132px;
}

.tab-more {
  width: 120px;
}

.gr-panel {
  margin: 0 4px 0 6px;
  height: 208px;
  border: 1px solid #777;
  padding: 11px 0 0 8px;
}

.type-row {
  display: flex;
  height: 15px;
  align-items: center;
}

.type-row label {
  width: 105px;
  flex: none;
  padding-left: 1px;
}

.type-row .label-summary {
  margin-left: 36px;
}

.items {
  border-collapse: collapse;
  table-layout: fixed;
  width: 490px;
  background: #fff;
}

.items th,
.items td {
  border: 1px solid #b4b4b4;
  height: 15px;
  padding: 0 3px;
  font-weight: 400;
  font-size: 9.5px;
  text-align: left;
  overflow: hidden;
  white-space: nowrap;
}

.items th {
  height: 17px;
  background: #e2e2e2;
}

.items .c-num {
  width: 16px;
  background: #dcdcdc;
  border-color: #dcdcdc #c4c4c4 #c4c4c4 #dcdcdc;
  padding-left: 3px;
}

.items .c-item {
  width: 85px;
}

.items .c-qty {
  width: 75px;
}

.items .c-price {
  width: 93px;
}

.items .c-disc {
  width: 38px;
}

.items .c-tax {
  width: 47px;
}

.items .num {
  text-align: right;
}

.items-hscroll {
  width: 473px;
  height: 15px;
  margin-left: 17px;
}

.items-thumb {
  flex: none;
  width: 363px;
}

.gr-lower {
  display: flex;
  padding: 0 0 0 5px;
}

.lower-left {
  width: 283px;
  flex: none;
  padding-top: 2px;
}

.lower-left .row label {
  width: 115px;
  padding-left: 1px;
}

.field-lower {
  width: 136px;
}

.lower-left .row:first-child .field-lower {
  width: 137px;
}

.row-remarks {
  height: 55px;
  margin-top: 58px;
  align-items: flex-start;
}

.lower-left .row-remarks label {
  height: 55px;
  line-height: 16px;
}

.remarks {
  height: 55px;
}

.lower-right {
  padding-top: 7px;
}

.lower-right .row label {
  width: 111px;
}

.lower-right .row .label-disc {
  width: 63px;
}

.field-total {
  width: 128px;
}

.disc-pct {
  width: 33px;
  margin-right: 3px;
}

.pct {
  width: 12px;
  flex: none;
  font-size: 9.5px;
}

.num {
  text-align: right;
  padding-right: 1px;
}

.lower-right .row .label-check {
  display: flex;
  align-items: center;
  gap: 5px;
}

.check {
  width: 11px;
  height: 11px;
  margin-left: 1px;
  border: 1px solid #666;
  background: #fff;
  flex: none;
}

.gr-buttons {
  display: flex;
  padding: 6px 0 0 4px;
}

.btn {
  height: 18px;
  padding: 0;
  border: 1px solid #8a7a45;
  background: linear-gradient(#fbe7a8, #f2c660);
  font-family: inherit;
  font-size: 10px;
  color: #333;
  position: relative;
}

.btn-add {
  width: 61px;
  margin-right: 6px;
  box-shadow: inset 6px 0 #f0a020;
}

.btn-cancel {
  width: 59px;
  margin-right: 206px;
}

.btn-copy {
  width: 93px;
  margin-right: 4px;
}

.btn-copy::after {
  content: "";
  position: absolute;
  right: 3px;
  bottom: 3px;
  border: 2px solid transparent;
  border-right-color: #333;
  border-bottom-color: #333;
}

.btn-off {
  width: 93px;
  border-color: #aaa;
  background: linear-gradient(#f2f2f2, #d8d8d8);
  color: #777;
}

/* date picker */
.calendar {
  position: absolute;
  z-index: 2;
  left: 687px;
  top: 80px;
  width: 183px;
  height: 169px;
  background: #f6f6f6;
  border: 1px solid #111;
  padding: 10px 11px 0;
}

.cal-head {
  display: flex;
  align-items: center;
  height: 15px;
  position: relative;
}

.cal-prev,
.cal-next {
  border: 4px solid transparent;
  flex: none;
}

.cal-prev {
  border-right: 7px solid #222;
  border-left: none;
  margin: 0 10px 0 6px;
}

.cal-next {
  border-left: 7px solid #222;
  border-right: none;
  margin-left: 10px;
}

.cal-month {
  width: 75px;
  height: 14px;
  line-height: 12px;
  font-size: 9.5px;
  margin-right: 5px;
}

.cal-year {
  width: 31px;
  height: 14px;
  line-height: 12px;
  background: #fbe38a;
  font-size: 9px;
}

.cal-year::after {
  right: 1px;
}

.cal-body {
  width: 158px;
  height: 126px;
  margin-top: 4px;
  background: #f2f2f2;
  border: 1px solid #b4b4b4;
  border-top: none;
}

.cal-grid {
  border-collapse: collapse;
  table-layout: fixed;
  width: 156px;
}

.cal-grid th {
  height: 19px;
  background: #e2e2e2;
  border-right: 1px solid #fff;
  font-weight: 400;
  font-size: 9.5px;
  padding: 0;
}

.cal-grid td {
  height: 18px;
  text-align: right;
  padding: 0 3px 0 0;
  background: #fafafa;
  font-size: 9.5px;
  color: #222;
}

.cal-grid .we {
  background: #e4e4e4;
  padding-right: 5px;
}

.cal-grid .off {
  color: #aaa;
}

.cal-grid .today {
  background: #f6cf74;
  outline: 1px solid #554;
  outline-offset: -1px;
  padding-right: 5px;
}

.years {
  position: absolute;
  z-index: 3;
  left: 801px;
  top: 104px;
  width: 32px;
  height: 316px;
  margin: 0;
  padding: 1px 0 0;
  list-style: none;
  background: #fff;
  border: 1px solid #111;
  font-size: 9.5px;
}

.years li {
  height: 15px;
  line-height: 15px;
  padding-left: 2px;
}

.years .sel {
  background: #f8d67e;
}

.cursor {
  position: absolute;
  z-index: 4;
  left: 824px;
  top: 99px;
  width: 12px;
  height: 18px;
}

/* search box */
.search {
  position: absolute;
  left: 885px;
  top: 10px;
  display: flex;
  height: 18px;
}

.search-drop {
  width: 29px;
  border: 1px solid #999;
  background: #f4f4f4;
  display: flex;
  align-items: center;
  justify-content: center;
  gap: 2px;
}

.search-drop i {
  border: 2px solid transparent;
  border-top: 3px solid #333;
  border-bottom: none;
}

.search-input {
  width: 264px;
  height: 17px;
  margin: 0 2px 0 2px;
  padding-left: 3px;
  background: #fbe68a;
  border: 1px solid #bbb;
  border-radius: 2px;
  font-size: 9.5px;
  font-style: italic;
  line-height: 14px;
  color: #a9a57a;
}

.search-btn {
  width: 53px;
  background: #8a8a8a;
  color: #fff;
  font-size: 12px;
  font-weight: 700;
  text-align: center;
  line-height: 18px;
}

/* status bar */
.status {
  height: 45px;
  flex: none;
  background: #f8f8f8;
  border-top: 2px solid #bbb;
  border-bottom: 5px solid #000;
  display: flex;
  padding: 5px 0 0 8px;
}

.status-row {
  display: flex;
  height: 12px;
}

.st-box {
  display: block;
  height: 12px;
  border: 1px solid #777;
  background: #e8e8e8;
  font-size: 9px;
  line-height: 11px;
  padding-left: 2px;
}

.st-string {
  width: 535px;
}

.st-date {
  width: 82px;
  font-size: 9px;
  line-height: 12px;
  padding: 0 0 0 17px;
}

.st-a {
  width: 266px;
  margin-right: 4px;
}

.st-b {
  width: 264px;
}

.st-error {
  width: 1150px;
  height: 12px;
  margin-top: 4px;
  background: #b0161c;
  border: 1px solid #8a1015;
  color: #eec4c4;
  font-size: 9.2px;
  line-height: 11px;
  display: flex;
  align-items: center;
  gap: 5px;
  padding-left: 5px;
}

.err-dot {
  width: 9px;
  height: 9px;
  border-radius: 50%;
  background: #eee;
  color: #901015;
  font-size: 7px;
  line-height: 9px;
  text-align: center;
  font-weight: 700;
}

.sap-logo {
  display: flex;
  align-items: center;
  gap: 2px;
  margin: 0 0 3px 21px;
}

.sap {
  font-size: 21px;
  font-weight: 700;
  font-style: italic;
  letter-spacing: -1.5px;
  color: #8f8f8f;
}

.sap-sub {
  display: flex;
  flex-direction: column;
  line-height: 1;
}

.sap-bus {
  font-size: 8px;
  color: #999;
}

.sap-one {
  font-size: 14px;
  color: #e2b53c;
}

/* vm toolbar overlay */
.vm-bar {
  position: absolute;
  left: 98px;
  top: 0;
  width: 1087px;
  height: 55px;
  background: #f2f5fa;
  border-bottom: 1px solid #b8c4d4;
  box-shadow: 0 1px 1px rgba(0, 0, 0, 0.1);
}

.vm-tabs {
  height: 25px;
  display: flex;
  align-items: flex-end;
  border-bottom: 1px solid #ccd6e4;
  position: relative;
  padding-left: 7px;
}

.vm-logo {
  width: 16px;
  height: 18px;
  margin: 0 8px 3px 0;
  flex: none;
}

.vm-tab {
  width: 77px;
  height: 22px;
  margin-right: 6px;
  border: 1px solid #b8c4d4;
  border-bottom: none;
  border-radius: 3px 3px 0 0;
  display: flex;
  align-items: center;
  gap: 3px;
  padding: 0 4px;
  font-size: 10px;
  background: #e6ecf5;
}

.vm-tab span {
  flex: 1;
  white-space: nowrap;
}

.vm-tab b {
  color: #9aa;
  font-weight: 400;
  font-size: 11px;
}

.vm-tab-active {
  width: 186px;
  background: #fff;
  font-weight: 700;
  font-size: 11px;
  color: #222;
}

.vm-win {
  position: absolute;
  right: 8px;
  top: 5px;
  display: flex;
  align-items: center;
  gap: 19px;
  color: #666;
}

.vm-min {
  width: 11px;
  height: 5px;
  margin-top: 3px;
  border: 1px solid #777;
}

.vm-max {
  width: 10px;
  height: 12px;
  border: 1px solid #777;
  box-shadow: 2px -2px 0 -1px #999;
}

.vm-close {
  font-size: 11px;
  width: 12px;
}

.vm-tools {
  height: 29px;
  padding-left: 3px;
  display: flex;
  align-items: center;
  background: linear-gradient(#e9eff8, #cfdcee);
}

.vm-btn {
  width: 24px;
  height: 25px;
  flex: none;
  border: 1px solid #8fb2d6;
  border-radius: 2px;
  background: #d4e4f6;
  display: flex;
  align-items: center;
  justify-content: center;
}

.vm-menu {
  display: flex;
  gap: 14.5px;
  margin: 0 13px 0 7px;
  font-size: 11px;
  color: #333;
  width: 197px;
  flex: none;
}

.vm-sep {
  width: 1px;
  height: 20px;
  background: #8b9bb0;
  flex: none;
}

.vm-pause {
  display: flex;
  gap: 2px;
  margin-left: 13px;
  flex: none;
}

.vm-pause i {
  width: 5px;
  height: 15px;
  background: #f3c53a;
  border: 1px solid #a5852a;
}

.vm-caret {
  border: 4px solid transparent;
  border-top: 4px solid #345;
  border-bottom: none;
  margin: 0 12px 0 8px;
  flex: none;
}

.vi {
  width: 18px;
  height: 18px;
  flex: none;
  margin: 0 5px;
}

.vm-tools .vm-sep + .vi {
  margin-left: 10px;
}

.vm-tools .vi-share {
  margin: 0 8px 0 13px;
}

.vm-tools .vi-clock {
  margin-left: 11px;
}

.sep-view {
  margin-left: 6px;
}

.vm-full {
  margin: 0 3px;
}

.vm-unity {
  margin-left: 8px;
}
```
